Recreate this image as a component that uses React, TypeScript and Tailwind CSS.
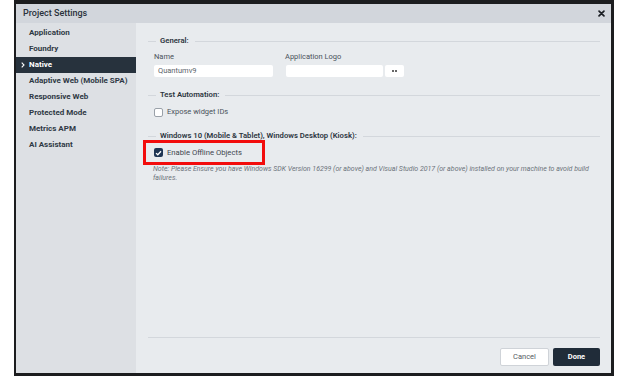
const navItems = [
  'Application',
  'Foundry',
  'Native',
  'Adaptive Web (Mobile SPA)',
  'Responsive Web',
  'Protected Mode',
  'Metrics APM',
  'AI Assistant',
];

const Legend = ({ title }: { title: string }) => {
  return (
    <div className="flex items-center h-[10px]">
      <div className="w-[8px] h-px bg-[#d3d7dc]" />
      <span className="ml-[4px] text-[7.7px] font-semibold text-[#2c3540] whitespace-nowrap leading-none">
        {title}
      </span>
      <div className="flex-1 h-px bg-[#d3d7dc] ml-[6px]" />
    </div>
  );
};

const App = () => {
  return (
    <div
      className="w-[629px] h-[376px] bg-white flex"
      style={{ fontFamily: 'Roboto, "Liberation Sans", sans-serif' }}
    >
      <div className="w-[14px]" />
      <div className="w-[600px] h-full bg-[#1c1d1f] pl-[2px] pr-[3px] pt-[4px] pb-[3px]">
        <div className="h-full flex flex-col">
          {/* title bar */}
          <div className="h-[19px] bg-[#d2d6dc] flex items-center justify-between pl-[7px] pr-[6px]">
            <span className="text-[9px] font-medium text-[#2a323b] leading-none">Project Settings</span>
            <svg width="7" height="7" viewBox="0 0 10 10" className="text-[#1b1f24]">
              <path d="M1.5 1.5l7 7M8.5 1.5l-7 7" stroke="currentColor" strokeWidth="2.4" strokeLinecap="round" />
            </svg>
          </div>

          <div className="flex flex-1 min-h-0">
            {/* sidebar */}
            <div className="w-[120px] bg-[#dde0e4] pt-[2px]">
              {navItems.map((item) =>
                item === 'Native' ? (
                  <div key={item} className="relative h-[16px] bg-[#27323d] flex items-center pl-[13px]">
                    <svg width="4" height="6" viewBox="0 0 4 6" className="absolute left-[5px] top-[5px]">
                      <path d="M0.7 0.7L3 3L0.7 5.3" stroke="white" strokeWidth="1.1" fill="none" />
                    </svg>
                    <span className="text-[8px] font-bold text-white leading-none">{item}</span>
                  </div>
                ) : (
                  <div key={item} className="h-[16px] flex items-center pl-[13px]">
                    <span className="text-[8px] font-bold text-[#2f3944] leading-none whitespace-nowrap">{item}</span>
                  </div>
                )
              )}
            </div>

            {/* content */}
            <div className="flex-1 bg-[#e8ebee] flex flex-col pl-[12px] pr-[11px]">
              <div className="mt-[13px]">
                <Legend title="General:" />
              </div>
              <div className="flex ml-[6px] mt-[6px] h-[10px] items-center text-[7.5px] text-[#4a525b] leading-none">
                <span className="w-[131px]">Name</span>
                <span>Application Logo</span>
              </div>
              <div className="flex ml-[6px] mt-[3px] h-[12px]">
                <div className="w-[119px] h-full bg-white rounded-[2px] flex items-center pl-[4px] text-[7.5px] text-[#5b636b] leading-none">
                  Quantumv9
                </div>
                <div className="w-[97px] h-full bg-white rounded-[2px] ml-[13px]" />
                <div className="w-[19px] h-full bg-white rounded-[2px] ml-[2px] flex items-center justify-center gap-[1.5px]">
                  <span className="w-[2px] h-[2px] rounded-full bg-[#333]" />
                  <span className="w-[2px] h-[2px] rounded-full bg-[#333]" />
                </div>
              </div>

              <div className="mt-[13px]">
                <Legend title="Test Automation:" />
              </div>
              <div className="flex items-center ml-[6px] mt-[7px] h-[10px]">
                <div className="w-[9px] h-[9px] bg-white border border-[#9aa1a9] rounded-[2px]" />
                <span className="ml-[4px] text-[7.5px] text-[#4a525b] leading-none">Expose widget IDs</span>
              </div>

              <div className="mt-[14px]">
                <Legend title="Windows 10 (Mobile & Tablet), Windows Desktop (Kiosk):" />
              </div>
              <div className="-ml-[5px] -mt-[1px] w-[122px] h-[25px] border-[3px] border-[#f20c0c] flex items-center pl-[8px]">
                <div className="w-[9px] h-[9px] bg-[#1e3553] rounded-[2px] flex items-center justify-center">
                  <svg width="7" height="6" viewBox="0 0 7 6">
                    <path d="M1 3.1L2.8 4.8L6 1.2" stroke="white" strokeWidth="1.3" fill="none" />
                  </svg>
                </div>
                <span className="ml-[4px] text-[7.7px] text-[#3e464f] leading-none whitespace-nowrap">
                  Enable Offline Objects
                </span>
              </div>
              <p className="ml-[5px] text-[7px] italic text-[#6c737b] leading-[9px] whitespace-nowrap">
                Note: Please Ensure you have Windows SDK Version 16299 (or above) and Visual Studio 2017 (or above) installed on your machine to avoid build
                <br />
                failures.
              </p>

              <div className="flex-1" />
              <div className="h-px bg-[#d3d7dc]" />
              <div className="flex justify-end gap-[4px] mt-[10px] mb-[7px]">
                <button className="w-[49px] h-[18px] bg-white border border-[#cfd3d8] rounded-[2px] text-[7.5px] text-[#555c64] leading-none">
                  Cancel
                </button>
                <button className="w-[47px] h-[18px] bg-[#202c39] rounded-[2px] text-[7.5px] font-bold text-white leading-none">
                  Done
                </button>
              </div>
            </div>
          </div>
        </div>
      </div>
    </div>
  );
};

export default App;
